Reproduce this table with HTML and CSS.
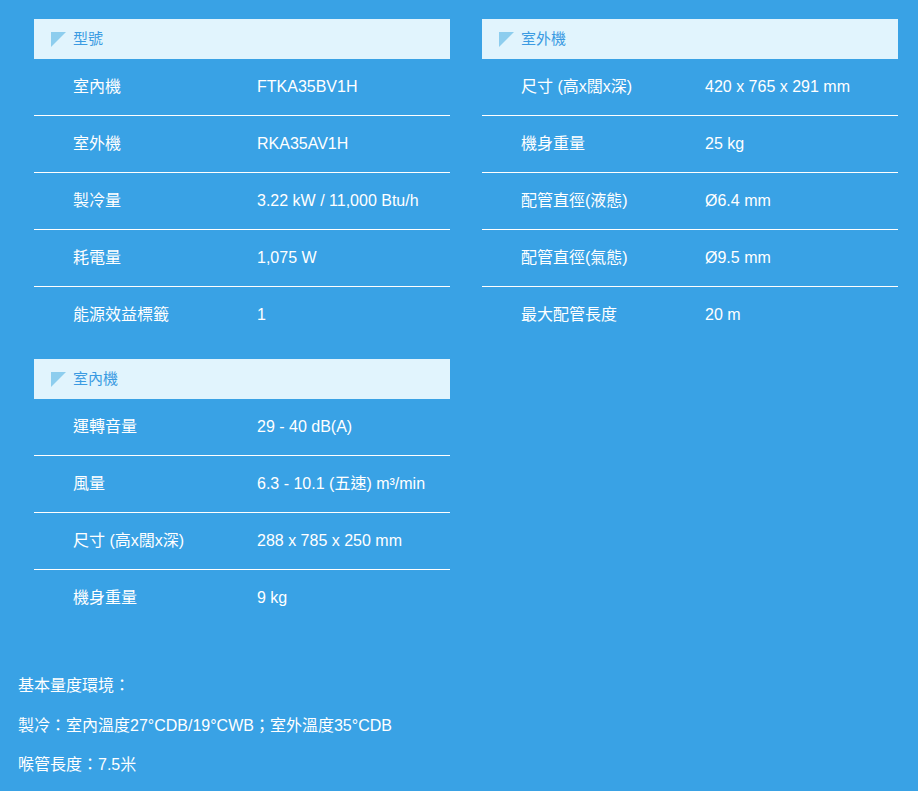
FILE: index.html
```html
<!DOCTYPE html>
<html lang="zh-Hant">
<head>
<meta charset="utf-8">
<title>規格</title>
<link rel="stylesheet" href="styles.css">
</head>
<body>
<div class="page">
  <div class="columns">
    <div class="col">
      <section class="spec">
        <h3 class="spec-head"><span class="tri"></span><span class="head-text">型號</span></h3>
        <div class="row"><span class="label">室內機</span><span class="value">FTKA35BV1H</span></div>
        <div class="row"><span class="label">室外機</span><span class="value">RKA35AV1H</span></div>
        <div class="row"><span class="label">製冷量</span><span class="value">3.22 kW / 11,000 Btu/h</span></div>
        <div class="row"><span class="label">耗電量</span><span class="value">1,075 W</span></div>
        <div class="row"><span class="label">能源效益標籤</span><span class="value">1</span></div>
      </section>
      <section class="spec">
        <h3 class="spec-head"><span class="tri"></span><span class="head-text">室內機</span></h3>
        <div class="row"><span class="label">運轉音量</span><span class="value">29 - 40 dB(A)</span></div>
        <div class="row"><span class="label">風量</span><span class="value">6.3 - 10.1 (五速) m³/min</span></div>
        <div class="row"><span class="label">尺寸 (高x闊x深)</span><span class="value">288 x 785 x 250 mm</span></div>
        <div class="row"><span class="label">機身重量</span><span class="value">9 kg</span></div>
      </section>
    </div>
    <div class="col">
      <section class="spec">
        <h3 class="spec-head"><span class="tri"></span><span class="head-text">室外機</span></h3>
        <div class="row"><span class="label">尺寸 (高x闊x深)</span><span class="value">420 x 765 x 291 mm</span></div>
        <div class="row"><span class="label">機身重量</span><span class="value">25 kg</span></div>
        <div class="row"><span class="label">配管直徑(液態)</span><span class="value">Ø6.4 mm</span></div>
        <div class="row"><span class="label">配管直徑(氣態)</span><span class="value">Ø9.5 mm</span></div>
        <div class="row"><span class="label">最大配管長度</span><span class="value">20 m</span></div>
      </section>
    </div>
  </div>
  <div class="notes">
    <p>基本量度環境：</p>
    <p>製冷：室內溫度27°CDB/19°CWB；室外溫度35°CDB</p>
    <p>喉管長度：7.5米</p>
  </div>
</div>
</body>
</html>
```
FILE: styles.css
```css
html, body {
  margin: 0;
  padding: 0;
  background: #39a2e5;
}
body {
  font-family: "Liberation Sans", Arial, "Noto Sans CJK TC", sans-serif;
  color: #ffffff;
  font-size: 16px;
}
.page {
  width: 918px;
  height: 791px;
  overflow: hidden;
  box-sizing: border-box;
  padding: 19px 20px 0 18px;
}
.columns {
  display: grid;
  grid-template-columns: 416px 416px;
  column-gap: 32px;
  padding-left: 16px;
}
.col {
  display: flex;
  flex-direction: column;
  gap: 15px;
}
.spec-head {
  margin: 0;
  height: 40px;
  background: #e1f4fd;
  color: #3b9be2;
  font-size: 15px;
  font-weight: normal;
  display: flex;
  align-items: center;
  padding-left: 17px;
}
.head-text {
  line-height: 40px;
}
.tri {
  width: 0;
  height: 0;
  border-top: 15px solid #8dcdee;
  border-right: 15px solid transparent;
  margin-right: 7px;
}
.row {
  height: 57px;
  line-height: 56px;
  border-bottom: 1px solid #ffffff;
  box-sizing: border-box;
  white-space: nowrap;
}
.row:last-child {
  border-bottom: none;
}
.label {
  display: inline-block;
  width: 184px;
  padding-left: 39px;
  box-sizing: content-box;
  vertical-align: baseline;
}
.notes {
  margin-top: 39px;
}
.notes p {
  margin: 0;
  line-height: 39.5px;
}
```
